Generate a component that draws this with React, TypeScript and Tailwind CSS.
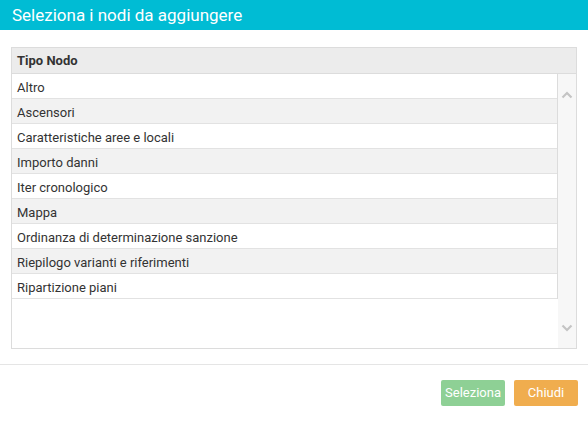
import React from "react";

const rows = [
  "Altro",
  "Ascensori",
  "Caratteristiche aree e locali",
  "Importo danni",
  "Iter cronologico",
  "Mappa",
  "Ordinanza di determinazione sanzione",
  "Riepilogo varianti e riferimenti",
  "Ripartizione piani",
];

export default function App() {
  return (
    <div
      className="w-[588px] h-[421px] bg-white overflow-hidden"
      style={{ fontFamily: "Roboto, 'Liberation Sans', sans-serif" }}
    >
      <div className="h-[30px] bg-[#00bcd4] text-white text-[17px] leading-[30px] pl-[12px]">
        Seleziona i nodi da aggiungere
      </div>
      <div className="pt-[17px] px-[11px]">
        <div className="h-[302px] border border-[#dcdcdc] flex flex-col">
          <div className="h-[26px] shrink-0 bg-[#ececec] border-b border-[#dcdcdc] flex items-center pl-[5px] text-[13px] font-bold text-[#333]">
            Tipo Nodo
          </div>
          <div className="flex flex-1 min-h-0">
            <div className="flex-1 self-start border-r border-[#dcdcdc]">
              {rows.map((r, i) => (
                <div
                  key={r}
                  className={`h-[25px] flex items-center pt-[4px] pl-[5px] text-[13px] text-[#333] border-b border-[#e2e2e2] ${
                    i % 2 === 1 ? "bg-[#f2f2f2]" : "bg-white"
                  }`}
                >
                  {r}
                </div>
              ))}
            </div>
            <div className="w-[18px] bg-[#f7f7f7] flex flex-col items-center justify-between pt-[17px] pb-[16px]">
              <svg width="12" height="8" viewBox="0 0 12 8">
                <path d="M1.5 6.5 L6 2 L10.5 6.5" fill="none" stroke="#c4c4c4" strokeWidth="2.2" />
              </svg>
              <svg width="12" height="8" viewBox="0 0 12 8">
                <path d="M1.5 1.5 L6 6 L10.5 1.5" fill="none" stroke="#c4c4c4" strokeWidth="2.2" />
              </svg>
            </div>
          </div>
        </div>
      </div>
      <div className="mt-[15px] border-t border-[#e5e5e5]" />
      <div className="flex justify-end gap-[9px] pr-[10px] pt-[15px]">
        <button className="w-[64px] h-[26px] rounded-[2px] bg-[#8ed095] text-white text-[13px]">
          Seleziona
        </button>
        <button className="w-[64px] h-[26px] rounded-[2px] bg-[#f0ad4e] text-white text-[13px]">
          Chiudi
        </button>
      </div>
    </div>
  );
}
